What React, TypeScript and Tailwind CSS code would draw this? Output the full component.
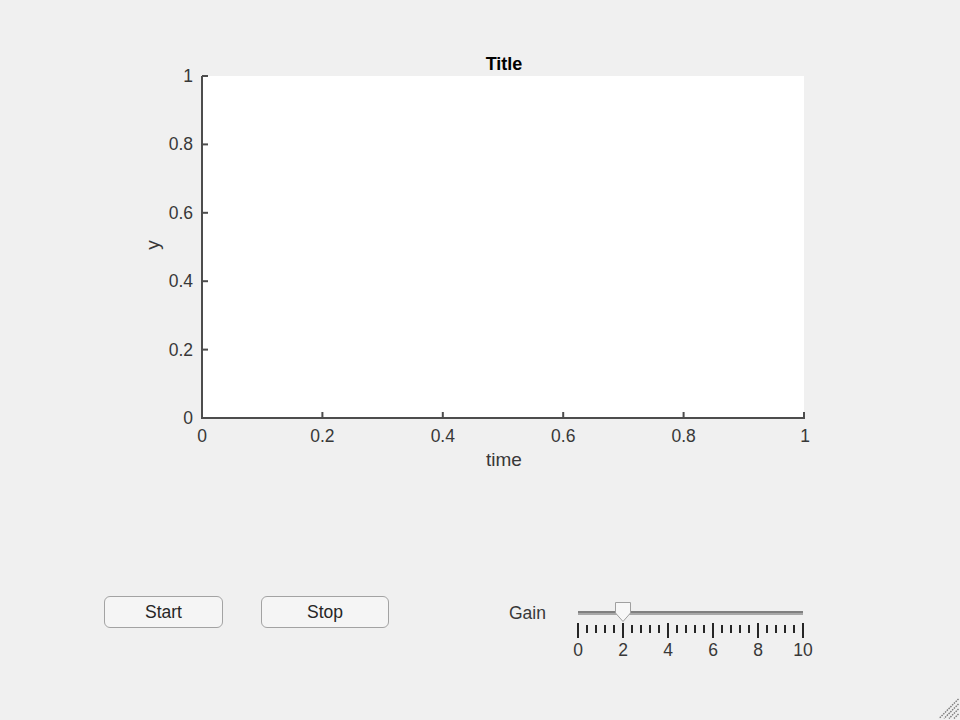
import React from "react";

const FONT = '"Liberation Sans", Arial, sans-serif';

function Plot() {
  const x0 = 202;
  const x1 = 804;
  const y0 = 418;
  const y1 = 76;
  const xt = [0, 0.2, 0.4, 0.6, 0.8, 1];
  const yt = [0, 0.2, 0.4, 0.6, 0.8, 1];
  const px = (v: number) => x0 + (x1 - x0) * v;
  const py = (v: number) => y0 - (y0 - y1) * v;
  return (
    <svg width={960} height={480} style={{ fontFamily: FONT }} className="block shrink-0">
      <rect x={x0} y={y1} width={x1 - x0} height={y0 - y1} fill="#ffffff" />
      <text x={504} y={70} textAnchor="middle" fontSize={18} fontWeight="bold" fill="#000">
        Title
      </text>
      <line x1={x0} y1={y1} x2={x0} y2={y0 + 1} stroke="#4d4d4d" strokeWidth={2} />
      <line x1={x0 - 1} y1={y0} x2={x1 + 1} y2={y0} stroke="#4d4d4d" strokeWidth={2} />
      {yt.map((v) => (
        <g key={"y" + v}>
          <line x1={x0} y1={py(v)} x2={x0 + 6} y2={py(v)} stroke="#4d4d4d" strokeWidth={2} />
          <text x={193} y={py(v) + 6} textAnchor="end" fontSize={17.5} fill="#383838">
            {String(v)}
          </text>
        </g>
      ))}
      {xt.map((v) => (
        <g key={"x" + v}>
          <line x1={px(v)} y1={y0} x2={px(v)} y2={y0 - 6} stroke="#4d4d4d" strokeWidth={2} />
          <text x={px(v) + (v === 1 ? 1 : 0)} y={442} textAnchor="middle" fontSize={17.5} fill="#383838">
            {String(v)}
          </text>
        </g>
      ))}
      <text x={504} y={466} textAnchor="middle" fontSize={19} fill="#383838">
        time
      </text>
      <text
        x={159}
        y={245}
        textAnchor="middle"
        fontSize={19}
        fill="#383838"
        transform="rotate(-90 159 245)"
      >
        y
      </text>
    </svg>
  );
}

function Slider() {
  const sx = 8;
  const step = 45;
  const majors = [0, 2, 4, 6, 8, 10];
  const minors: number[] = [];
  for (let i = 0; i <= 25; i++) if (i % 5 !== 0) minors.push(i);
  const thumbX = sx + step * 1;
  return (
    <svg width={250} height={66} style={{ fontFamily: FONT }} className="block">
      <rect x={sx} y={15} width={225} height={2} fill="#808080" />
      <rect x={sx} y={17} width={225} height={2} fill="#a8a8a8" />
      {minors.map((i) => (
        <rect key={"m" + i} x={sx + i * 9 - 1} y={29} width={2} height={8} fill="#262626" />
      ))}
      {majors.map((v, i) => (
        <g key={"M" + v}>
          <rect x={sx + i * step - 1} y={27} width={2} height={15} fill="#262626" />
          <text x={sx + i * step} y={60} textAnchor="middle" fontSize={17.5} fill="#383838">
            {String(v)}
          </text>
        </g>
      ))}
      <path
        d={`M ${thumbX - 7.5} 6.5 H ${thumbX + 7.5} V 17 L ${thumbX} 25.5 L ${thumbX - 7.5} 17 Z`}
        fill="#f7f7f7"
        stroke="#a0a0a0"
        strokeWidth={1}
      />
    </svg>
  );
}

function Grip() {
  return (
    <svg width={24} height={24} className="absolute right-0 bottom-0">
      {[0, 5, 10, 15].map((o) => (
        <line
          key={o}
          x1={22.5}
          y1={3 + o}
          x2={3 + o}
          y2={22.5}
          stroke="#7a7a7a"
          strokeWidth={1.4}
          strokeDasharray="1.5 1"
        />
      ))}
    </svg>
  );
}

export default function App() {
  return (
    <div
      className="relative w-[960px] h-[720px] overflow-hidden bg-[#f0f0f0] flex flex-col"
      style={{ fontFamily: FONT }}
    >
      <Plot />
      <div className="flex items-start mt-[116px] pl-[104px]">
        <button className="w-[119px] h-[32px] pt-[2px] rounded-[6px] border border-[#a3a3a3] bg-[#f5f5f5] text-[17.5px] text-[#262626] leading-none">
          Start
        </button>
        <button className="ml-[38px] w-[128px] h-[32px] pt-[2px] rounded-[6px] border border-[#a3a3a3] bg-[#f5f5f5] text-[17.5px] text-[#262626] leading-none">
          Stop
        </button>
        <div className="ml-[120px] mt-[7px] w-[61px] text-[17.5px] leading-[20px] text-[#383838]">Gain</div>
        <Slider />
      </div>
      <Grip />
    </div>
  );
}
